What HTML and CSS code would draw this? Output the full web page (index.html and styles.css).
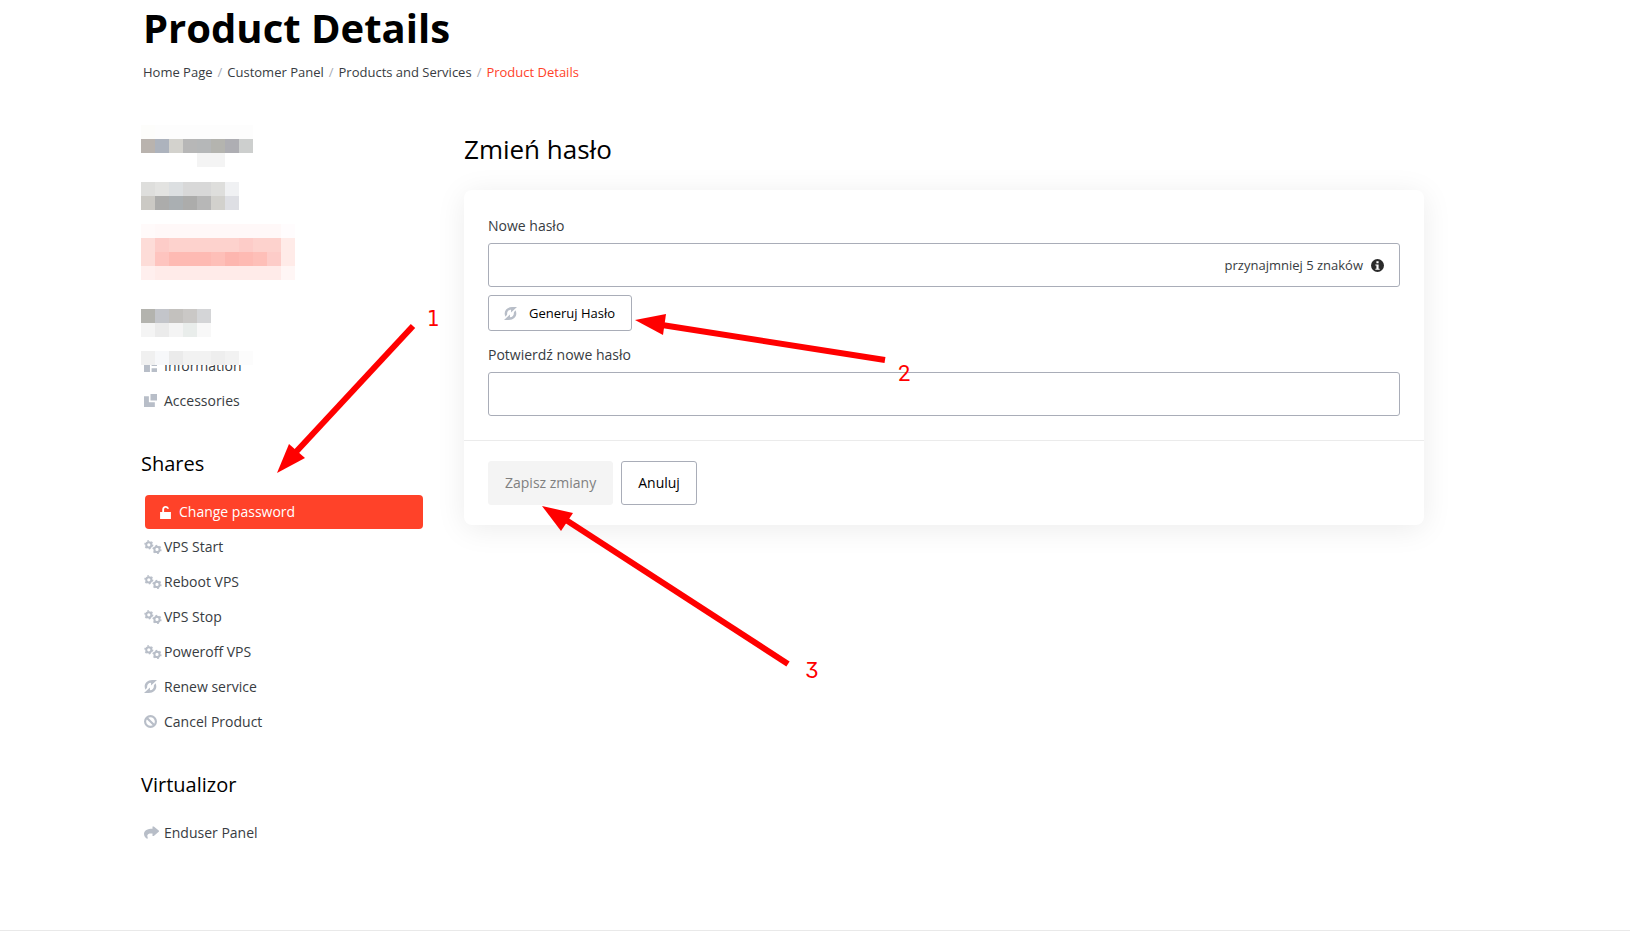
FILE: index.html
```html
<!DOCTYPE html>
<html lang="en">
<head>
    <meta charset="UTF-8">
    <meta name="viewport" content="width=device-width, initial-scale=1.0">
    <title>Product Details</title>
    <link rel="stylesheet" href="styles.css">
</head>
<body>
    <!-- Shared icons -->
    <svg class="icon-defs" aria-hidden="true">
        <symbol id="icon-info" viewBox="0 0 12 12">
            <path d="M0 0h5.500v12H0z M7 0h5v6.500H7z M7 8.500h5V12H7z"/>
        </symbol>
        <symbol id="icon-accessories" viewBox="0 0 12 12">
            <path d="M6 0h6v6H6z M0 2h4.500v5.500H10V12H0z"/>
        </symbol>
        <symbol id="icon-unlock" viewBox="0 0 12 12">
            <path d="M1 5.500h2V3.200C3 1.300 4.300 0 6 0s3 1.200 3.200 2.500H7.500C7.300 2 6.800 1.600 6.100 1.600 5.300 1.600 4.700 2.200 4.700 3v2.500H11V12H1z"/>
        </symbol>
        <symbol id="icon-cogs" viewBox="0 0 18 14">
            <g fill="none" stroke="currentColor">
                <circle cx="4.800" cy="4.800" r="2.600" stroke-width="2"/>
                <circle cx="4.800" cy="4.800" r="3.900" stroke-width="1.400" stroke-dasharray="1.800 2.280"/>
                <circle cx="13" cy="9.400" r="2.600" stroke-width="2"/>
                <circle cx="13" cy="9.400" r="3.900" stroke-width="1.400" stroke-dasharray="1.800 2.280"/>
            </g>
        </symbol>
        <symbol id="icon-renew" viewBox="0 0 12 12">
            <path d="M1.500 9C-1 5 2 0 7.500 0H12L6.500 5V2.500C4 2.600 2.700 4.200 2.900 7z M10.500 3C13 7 10 12 4.500 12H0l5.500-5v2.500c2.500-.1 3.800-1.700 3.600-4.500z"/>
        </symbol>
        <symbol id="icon-cancel" viewBox="0 0 12 12">
            <g fill="none" stroke="currentColor" stroke-width="2">
                <circle cx="6" cy="6" r="5"/>
                <path d="M2.500 2.500l7 7"/>
            </g>
        </symbol>
        <symbol id="icon-share" viewBox="0 0 15 12">
            <path d="M8.500 0h1.300L15 4.300v.6L9.800 9.500H8.500V7C5.500 6.700 3.500 7.300 3.300 9c0 1 .3 2 .7 3H2.500C1 11 0 9.300 0 7.300 0 4 3.500 2.200 8.500 2.200z"/>
        </symbol>
    </svg>

    <div class="container">
        <header class="page-header">
            <h1>Product Details</h1>
            <nav class="breadcrumb" aria-label="Breadcrumb">
                <a href="#">Home Page</a>
                <span class="separator">/</span>
                <a href="#">Customer Panel</a>
                <span class="separator">/</span>
                <a href="#">Products and Services</a>
                <span class="separator">/</span>
                <a href="#" class="current">Product Details</a>
            </nav>
        </header>

        <div class="content">
            <aside class="sidebar">
                <!-- Pixelated customer data -->
                <svg class="mosaic" width="154" height="240" shape-rendering="crispEdges" aria-hidden="true">
                    <path fill="#fdfdfb" d="M0 0h14v14H0z"/>
                    <path fill="#fdfdfd" d="M14 0h98v14H14z"/>
                    <path fill="#b9b3ae" d="M0 14h14v14H0z"/>
                    <path fill="#adb3bd" d="M14 14h14v14H14z"/>
                    <path fill="#d3d2cd" d="M28 14h14v14H28z"/>
                    <path fill="#b7b7b7" d="M42 14h14v14H42z"/>
                    <path fill="#b5b7b8" d="M56 14h14v14H56z"/>
                    <path fill="#b4b4af" d="M70 14h14v14H70z"/>
                    <path fill="#aeaeb3" d="M84 14h14v14H84z"/>
                    <path fill="#cdcfce" d="M98 14h14v14H98z"/>
                    <path fill="#f4f4f4" d="M56 28h28v14H56z"/>

                    <path fill="#dededc" d="M0 57h14v14H0z M70 57h14v14H70z"/>
                    <path fill="#e3e3e1" d="M14 57h14v14H14z"/>
                    <path fill="#dcdfe1" d="M28 57h14v14H28z"/>
                    <path fill="#d8d8d8" d="M42 57h28v14H42z"/>
                    <path fill="#f0f1f3" d="M84 57h14v14H84z"/>
                    <path fill="#cbc9c4" d="M0 71h14v14H0z"/>
                    <path fill="#acacab" d="M14 71h14v14H14z M42 71h14v14H42z"/>
                    <path fill="#aaafb2" d="M28 71h14v14H28z"/>
                    <path fill="#b7b7b7" d="M56 71h14v14H56z"/>
                    <path fill="#d2d1cd" d="M70 71h14v14H70z"/>
                    <path fill="#dedfe4" d="M84 71h14v14H84z"/>

                    <path fill="#fffafa" d="M0 99h14v14H0z"/>
                    <path fill="#fff8f8" d="M14 99h126v14H14z"/>
                    <path fill="#fffcfd" d="M140 99h14v14h-14z"/>
                    <path fill="#fddcd8" d="M0 113h14v28H0z"/>
                    <path fill="#fdccc8" d="M14 113h14v14H14z M98 113h14v14H98z M126 127h14v14h-14z"/>
                    <path fill="#fdd2cd" d="M28 113h70v14H28z M112 113h28v14h-28z"/>
                    <path fill="#ffebe8" d="M140 113h14v28h-14z"/>
                    <path fill="#fec4bf" d="M14 127h14v14H14z"/>
                    <path fill="#febab3" d="M28 127h42v14H28z M98 127h14v14H98z"/>
                    <path fill="#febfb8" d="M70 127h14v14H70z M112 127h14v14h-14z"/>
                    <path fill="#fdb6af" d="M84 127h14v14H84z"/>
                    <path fill="#ffefee" d="M0 141h14v14H0z"/>
                    <path fill="#ffebe9" d="M14 141h126v14H14z"/>
                    <path fill="#fff6f5" d="M140 141h14v14h-14z"/>

                    <path fill="#b3b3ae" d="M0 184h14v14H0z"/>
                    <path fill="#c3c5ca" d="M14 184h14v14H14z"/>
                    <path fill="#c3c1be" d="M28 184h14v14H28z"/>
                    <path fill="#cac8c6" d="M42 184h14v14H42z"/>
                    <path fill="#d4d5d7" d="M56 184h14v14H56z"/>
                    <path fill="#f4f4f4" d="M0 198h14v14H0z M28 198h14v14H28z"/>
                    <path fill="#ebebeb" d="M14 198h14v14H14z"/>
                    <path fill="#e9edeb" d="M42 198h14v14H42z"/>
                    <path fill="#f8f8f8" d="M56 198h14v14H56z"/>

                    <path fill="#f0f0f0" d="M0 226h14v14H0z"/>
                    <path fill="#f7f8fa" d="M14 226h14v14H14z"/>
                    <path fill="#ebebeb" d="M28 226h14v14H28z"/>
                    <path fill="#f2f2f2" d="M42 226h28v14H42z M84 226h14v14H84z"/>
                    <path fill="#eeeeee" d="M70 226h14v14H70z"/>
                    <path fill="#fcfcfc" d="M98 226h14v14H98z"/>
                </svg>
                <ul class="menu">
                    <li><a href="#"><svg class="icon"><use href="#icon-info"/></svg>Information</a></li>
                    <li><a href="#"><svg class="icon"><use href="#icon-accessories"/></svg>Accessories</a></li>
                </ul>

                <h3>Shares</h3>
                <ul class="menu">
                    <li><a href="#" class="active"><svg class="icon"><use href="#icon-unlock"/></svg>Change password</a></li>
                    <li><a href="#"><svg class="icon cogs"><use href="#icon-cogs"/></svg>VPS Start</a></li>
                    <li><a href="#"><svg class="icon cogs"><use href="#icon-cogs"/></svg>Reboot VPS</a></li>
                    <li><a href="#"><svg class="icon cogs"><use href="#icon-cogs"/></svg>VPS Stop</a></li>
                    <li><a href="#"><svg class="icon cogs"><use href="#icon-cogs"/></svg>Poweroff VPS</a></li>
                    <li><a href="#"><svg class="icon"><use href="#icon-renew"/></svg>Renew service</a></li>
                    <li><a href="#"><svg class="icon"><use href="#icon-cancel"/></svg>Cancel Product</a></li>
                </ul>

                <h3>Virtualizor</h3>
                <ul class="menu">
                    <li><a href="#"><svg class="icon share"><use href="#icon-share"/></svg>Enduser Panel</a></li>
                </ul>
            </aside>

            <main class="main">
                <h2>Zmień hasło</h2>
                <form class="panel">
                    <div class="panel-body">
                        <label for="new-password">Nowe hasło</label>
                        <div class="password-field">
                            <input type="password" id="new-password">
                            <span class="hint">przynajmniej 5 znaków
                                <svg class="hint-icon" viewBox="0 0 12 12" aria-hidden="true">
                                    <circle cx="6" cy="6" r="6"/>
                                    <path fill="#fff" d="M5 2h2v2H5z M4 5h3v4h1v1H4V9h1V6H4z"/>
                                </svg>
                            </span>
                        </div>
                        <button type="button" class="btn btn-generate"><svg class="icon"><use href="#icon-renew"/></svg>Generuj Hasło</button>
                        <label for="confirm-password">Potwierdź nowe hasło</label>
                        <input type="password" id="confirm-password">
                    </div>
                    <div class="panel-footer">
                        <button type="submit" class="btn btn-save" disabled>Zapisz zmiany</button>
                        <button type="button" class="btn">Anuluj</button>
                    </div>
                </form>
            </main>
        </div>

        <!-- Step arrows over the page -->
        <svg class="steps" width="700" height="600" viewBox="141 100 700 600">
            <g stroke="#f00" stroke-width="6">
                <path d="M413 326L295 453"/>
                <path d="M885 360L662 325"/>
                <path d="M788 664L566 520"/>
            </g>
            <g fill="#f00">
                <path d="M277 473l12-29 16 14z"/>
                <path d="M635 320l31-6-3 21z"/>
                <path d="M542 506l31 7-12 18z"/>
                <text class="step-one" x="427" y="326">1</text>
                <text class="step-two" x="898" y="381">2</text>
                <text class="step-three" x="805" y="678">3</text>
            </g>
        </svg>
    </div>
    <footer class="footer"></footer>
</body>
</html>
```
FILE: styles.css
```css
* {
    box-sizing: border-box;
}

body {
    margin: 0;
    background-color: #fff;
    color: #383c42;
    font-family: "Open Sans", "Noto Sans", sans-serif;
    font-size: 14px;
    line-height: 20px;
}

a {
    color: inherit;
    text-decoration: none;
}

h1,
h2,
h3 {
    margin: 0;
    color: #000;
    font-weight: 400;
}

.icon-defs {
    display: none;
}

.container {
    position: relative;
    padding: 0 206px 0 141px;
}

/* Header */
.page-header {
    padding: 4px 0 0 2px;
}

h1 {
    font-size: 40px;
    font-weight: 700;
    line-height: 48px;
}

.breadcrumb {
    display: flex;
    gap: 5px;
    margin-top: 10px;
    font-size: 13px;
}

.separator {
    color: #a9adb8;
}

.breadcrumb .current {
    color: #ff4229;
}

.content {
    display: flex;
    gap: 41px;
    margin-top: 43px;
}

/* Sidebar */
.sidebar {
    flex: 0 0 282px;
}

.mosaic {
    position: relative;
    z-index: 1;
    display: block;
    margin-bottom: -17px;
}

.menu {
    display: flow-root;
    margin: 0;
    padding: 0;
    list-style: none;
}

.menu a {
    display: flex;
    align-items: center;
    height: 35px;
    padding-left: 3px;
}

.menu .active {
    height: 34px;
    margin: 1px 0 0 4px;
    padding-left: 14px;
    border-radius: 4px;
    background-color: #ff4229;
    color: #fff;
}

.sidebar h3 {
    margin: 32px 0 16px;
    font-size: 20px;
    line-height: 28px;
}

.icon {
    flex: none;
    width: 13px;
    height: 13px;
    margin-right: 7px;
    color: #b8bec8;
    fill: currentColor;
}

.active .icon {
    color: #fff;
}

.icon.cogs {
    width: 18px;
    height: 14px;
    margin-right: 2px;
}

.icon.share {
    width: 15px;
    margin-right: 5px;
}

/* Password form */
.main {
    flex: 1;
    min-width: 0;
}

h2 {
    margin: 8px 0 24px;
    font-size: 26px;
    line-height: 33px;
}

.panel {
    border-radius: 8px;
    background-color: #fff;
    box-shadow: 0 4px 30px rgba(0, 0, 0, 0.08);
}

.panel-body {
    padding: 26px 24px 24px;
    border-bottom: 1px solid #ebebeb;
}

label {
    display: block;
    margin-bottom: 7px;
}

input {
    display: block;
    width: 100%;
    height: 44px;
    padding: 0 16px;
    border: 1px solid #a9adb8;
    border-radius: 3px;
    background-color: #fff;
    font: inherit;
}

.password-field {
    position: relative;
}

/* Sits inside the right end of the input */
.hint {
    position: absolute;
    top: 0;
    right: 16px;
    display: flex;
    align-items: center;
    gap: 8px;
    height: 44px;
    font-size: 13px;
}

.hint-icon {
    width: 13px;
    height: 13px;
    fill: #2b2b2b;
}

.btn {
    height: 44px;
    padding: 0 16px;
    border: 1px solid #a9adb8;
    border-radius: 3px;
    background-color: #fff;
    color: #000;
    font: inherit;
    cursor: pointer;
}

.btn-generate {
    display: flex;
    align-items: center;
    height: 36px;
    margin: 8px 0 14px;
    padding-left: 15px;
    font-size: 13px;
}

.btn-generate .icon {
    margin-right: 12px;
}

.btn-save {
    border-color: #f4f4f4;
    background-color: #f4f4f4;
    color: #808080;
    cursor: default;
}

.panel-footer {
    display: flex;
    gap: 8px;
    padding: 20px 24px;
}

/* Numbered arrows */
.steps {
    position: absolute;
    top: 100px;
    left: 141px;
    overflow: visible;
    pointer-events: none;
}

.steps text {
    font-size: 22px;
}

.step-one {
    font-family: "DejaVu Sans Condensed", "DejaVu Sans", sans-serif;
}

.step-two {
    font-family: Roboto, sans-serif;
}

.step-three {
    font-family: Inter, sans-serif;
    font-feature-settings: "cv09";
}

.footer {
    height: 8px;
    margin-top: 80px;
    border-top: 1px solid #e9e9e9;
}
```
